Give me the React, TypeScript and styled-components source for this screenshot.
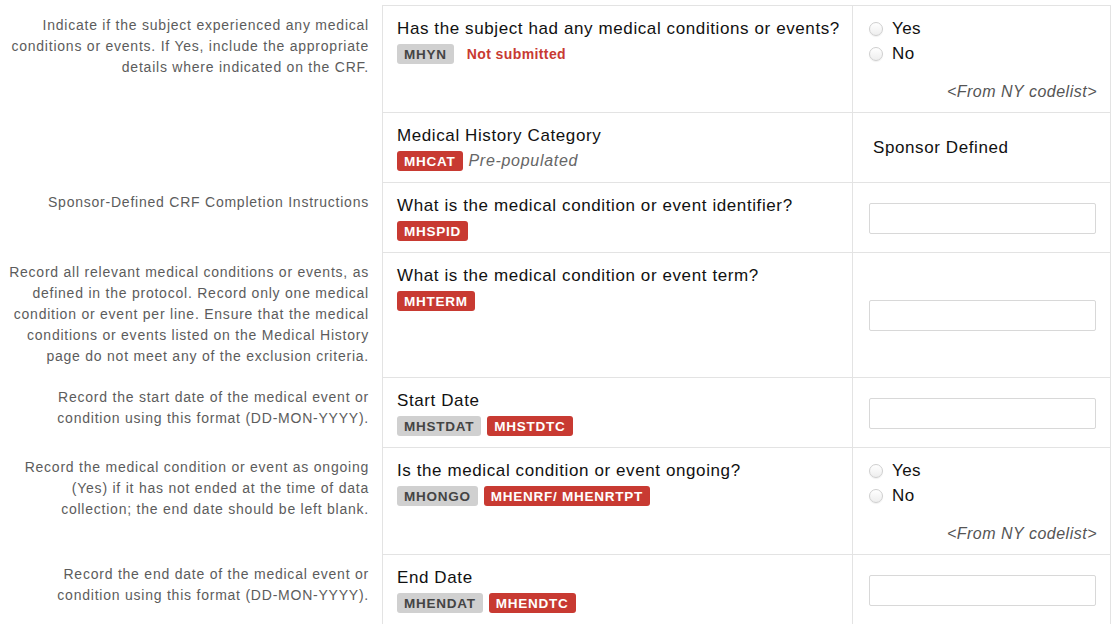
import React from "react";
import styled, { createGlobalStyle } from "styled-components";

const GlobalStyle = createGlobalStyle`
  html, body {
    margin: 0;
    padding: 0;
    background: #ffffff;
  }
  body {
    font-family: "Liberation Sans", Arial, Helvetica, sans-serif;
    color: #1a1a1a;
  }
`;

const Page = styled.div`
  padding-top: 5px;
  width: 1119px;
`;

const Row = styled.div`
  display: grid;
  grid-template-columns: 382px 470px 259px;
`;

const Instruction = styled.div`
  padding: 10px 13px 10px 4px;
  text-align: right;
  font-size: 14px;
  line-height: 21px;
  color: #5c5c5c;
  letter-spacing: 0.77px;
`;

const QuestionCell = styled.div`
  border-left: 1px solid #e3e3e3;
  border-top: 1px solid #e3e3e3;
  padding: 11px 8px 11px 14px;
`;

const AnswerCell = styled.div<{ $center?: boolean }>`
  border-left: 1px solid #e3e3e3;
  border-right: 1px solid #e3e3e3;
  border-top: 1px solid #e3e3e3;
  padding: 10px 13px 9px 16px;
  display: flex;
  flex-direction: column;
  justify-content: ${(p) => (p.$center ? "center" : "flex-start")};
`;

const Title = styled.div`
  font-size: 17px;
  line-height: 24px;
  letter-spacing: 0.6px;
  color: #111;
  white-space: nowrap;
`;

const BadgeRow = styled.div`
  display: flex;
  align-items: center;
  gap: 6px;
  margin-top: 3px;
  height: 20px;
`;

const Badge = styled.span<{ $tone: "gray" | "red" }>`
  display: inline-flex;
  align-items: center;
  height: 20px;
  padding: 0 7px;
  border-radius: 3px;
  font-size: 13.5px;
  font-weight: 700;
  letter-spacing: 0.75px;
  background: ${(p) => (p.$tone === "red" ? "#c83a32" : "#d0d0d0")};
  color: ${(p) => (p.$tone === "red" ? "#ffffff" : "#444444")};
`;

const Status = styled.span`
  margin-left: 7px;
  font-size: 14px;
  font-weight: 700;
  color: #c83a32;
  letter-spacing: 0.4px;
`;

const Note = styled.span`
  font-size: 16px;
  font-style: italic;
  color: #666;
  letter-spacing: 0.7px;
`;

const RadioList = styled.div`
  display: flex;
  flex-direction: column;
`;

const RadioOption = styled.label`
  display: flex;
  align-items: center;
  gap: 9px;
  font-size: 17px;
  line-height: 25px;
  letter-spacing: 0.4px;
  color: #111;
`;

const RadioCircle = styled.span`
  width: 14px;
  height: 14px;
  border-radius: 50%;
  border: 1px solid #cfcfcf;
  background: linear-gradient(#ffffff, #eeeeee);
  box-shadow: 0 1px 1px rgba(0, 0, 0, 0.06);
  box-sizing: border-box;
  flex: none;
`;

const Codelist = styled.div`
  margin-top: 15px;
  text-align: right;
  font-size: 16px;
  line-height: 22px;
  font-style: italic;
  letter-spacing: 0.5px;
  color: #555;
`;

const Plain = styled.div`
  font-size: 17px;
  line-height: 24px;
  letter-spacing: 0.6px;
  padding-left: 4px;
  color: #111;
`;

const TextInput = styled.div`
  height: 31px;
  width: 227px;
  box-sizing: border-box;
  border: 1px solid #d8d8d8;
  border-radius: 2px;
  background: #fff;
`;

type BadgeDef = { label: string; tone: "gray" | "red" };

type RowDef = {
  instruction?: string;
  title: string;
  badges: BadgeDef[];
  status?: string;
  note?: string;
  answer: "radio" | "input" | "sponsor";
};

const rows: RowDef[] = [
  {
    instruction:
      "Indicate if the subject experienced any medical conditions or events. If Yes, include the appropriate details where indicated on the CRF.",
    title: "Has the subject had any medical conditions or events?",
    badges: [{ label: "MHYN", tone: "gray" }],
    status: "Not submitted",
    answer: "radio",
  },
  {
    title: "Medical History Category",
    badges: [{ label: "MHCAT", tone: "red" }],
    note: "Pre-populated",
    answer: "sponsor",
  },
  {
    instruction: "Sponsor-Defined CRF Completion Instructions",
    title: "What is the medical condition or event identifier?",
    badges: [{ label: "MHSPID", tone: "red" }],
    answer: "input",
  },
  {
    instruction:
      "Record all relevant medical conditions or events, as defined in the protocol. Record only one medical condition or event per line. Ensure that the medical conditions or events listed on the Medical History page do not meet any of the exclusion criteria.",
    title: "What is the medical condition or event term?",
    badges: [{ label: "MHTERM", tone: "red" }],
    answer: "input",
  },
  {
    instruction:
      "Record the start date of the medical event or condition using this format (DD-MON-YYYY).",
    title: "Start Date",
    badges: [
      { label: "MHSTDAT", tone: "gray" },
      { label: "MHSTDTC", tone: "red" },
    ],
    answer: "input",
  },
  {
    instruction:
      "Record the medical condition or event as ongoing (Yes) if it has not ended at the time of data collection; the end date should be left blank.",
    title: "Is the medical condition or event ongoing?",
    badges: [
      { label: "MHONGO", tone: "gray" },
      { label: "MHENRF/ MHENRTPT", tone: "red" },
    ],
    answer: "radio",
  },
  {
    instruction:
      "Record the end date of the medical event or condition using this format (DD-MON-YYYY).",
    title: "End Date",
    badges: [
      { label: "MHENDAT", tone: "gray" },
      { label: "MHENDTC", tone: "red" },
    ],
    answer: "input",
  },
];

function Answer({ kind }: { kind: RowDef["answer"] }) {
  if (kind === "radio") {
    return (
      <AnswerCell>
        <RadioList>
          <RadioOption>
            <RadioCircle />
            Yes
          </RadioOption>
          <RadioOption>
            <RadioCircle />
            No
          </RadioOption>
        </RadioList>
        <Codelist>&lt;From NY codelist&gt;</Codelist>
      </AnswerCell>
    );
  }
  if (kind === "sponsor") {
    return (
      <AnswerCell $center>
        <Plain>Sponsor Defined</Plain>
      </AnswerCell>
    );
  }
  return (
    <AnswerCell $center>
      <TextInput />
    </AnswerCell>
  );
}

export default function App() {
  return (
    <>
      <GlobalStyle />
      <Page>
        {rows.map((r, i) => (
          <Row key={i}>
            <Instruction>{r.instruction}</Instruction>
            <QuestionCell>
              <Title>{r.title}</Title>
              <BadgeRow>
                {r.badges.map((b) => (
                  <Badge key={b.label} $tone={b.tone}>
                    {b.label}
                  </Badge>
                ))}
                {r.status && <Status>{r.status}</Status>}
                {r.note && <Note>{r.note}</Note>}
              </BadgeRow>
            </QuestionCell>
            <Answer kind={r.answer} />
          </Row>
        ))}
      </Page>
    </>
  );
}
